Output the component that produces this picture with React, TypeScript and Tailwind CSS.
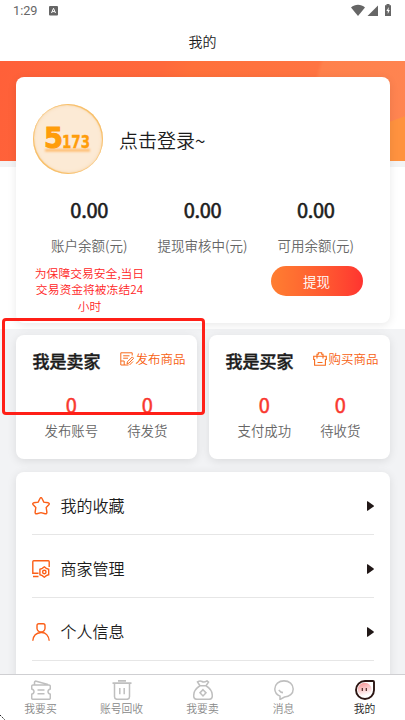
import React from "react";

const ink = "text-[#1c1c1c]";

function StatusBar() {
  return (
    <div className="flex h-[23px] items-center pl-[13px] pr-[13px] text-[#666]">
      <span className="font-[Roboto] text-[12.7px] font-normal leading-none">1:29</span>
      <svg className="-mt-px ml-3" width="9" height="10" viewBox="0 0 9 10">
        <rect width="9" height="9.5" rx="1" fill="#666" />
        <path d="M2.5 7 4.5 2.3 6.5 7M3.2 5.6H5.8" fill="none" stroke="#fff" strokeWidth="1" />
      </svg>
      <svg className="-mt-[2px] ml-auto" width="41" height="13" viewBox="0 0 41 13">
        <path d="M0 3.6C4-.1 10-.1 14 3.6L7 12Z" fill="#666" />
        <path d="M27 1.5V12H16.5Z" fill="#666" />
        <path d="M34 1.3H35.5V0H38.5V1.3H40V12H34Z" fill="#666" />
        <path d="M37.8 3 35.4 7H36.8V10L38.8 6H37.5Z" fill="#fff" />
      </svg>
    </div>
  );
}

function Logo() {
  return (
    <div className="flex size-[70px] items-center justify-center rounded-full bg-[#fcead5] shadow-[inset_-1px_1px_1px_#f8bd62,inset_1px_-1px_1px_#f8bd62,inset_0_0_4px_#f5d3a8]">
      <svg className="overflow-visible" width="50" height="40" viewBox="0 -4 50 40">
        <defs>
          <filter id="glow" x="-10%" y="-150%" width="120%" height="400%"><feGaussianBlur stdDeviation="1.3" /></filter>
        </defs>
        <rect x="2" y="26" width="45" height="2.5" fill="#ffb765" filter="url(#glow)" />
        <g fill="#ff9d0a" stroke="#ff9d0a" strokeWidth="1" strokeLinejoin="miter" className="font-['DejaVu_Sans'] font-bold">
          <text x="1" y="25" fontSize="28" textLength="19" lengthAdjust="spacingAndGlyphs">5</text>
          <text x="19" y="25.3" fontSize="18" strokeWidth=".4" textLength="28" lengthAdjust="spacingAndGlyphs">173</text>
        </g>
      </svg>
    </div>
  );
}

function Balance({ label }: { label: string }) {
  return (
    <div className="flex flex-1 flex-col items-center">
      <span className={`text-[20px] font-normal leading-[28px] tracking-[-0.3px] [-webkit-text-stroke:0.6px] ${ink}`}>0.00</span>
      <span className="mt-[11px] whitespace-nowrap text-[13.5px] leading-[20px] text-[#666]">{label}</span>
    </div>
  );
}

function Account() {
  return (
    <section className="h-[246px] rounded-lg bg-white pl-[17px] pr-[17px] shadow-[0_2px_10px_rgba(0,0,0,0.09)]">
      <div className="flex items-center pt-[27px]">
        <Logo />
        <span className={`ml-[16.5px] mt-px text-[19px] leading-[28px] ${ink}`}>点击登录~</span>
      </div>
      <div className="mt-[22px] flex">
        <Balance label="账户余额(元)" />
        <Balance label="提现审核中(元)" />
        <Balance label="可用余额(元)" />
      </div>
      <div className="mt-[10px] flex justify-between">
        <p className="w-[114px] text-center text-[11.8px] leading-[16.3px] text-[#ff2424]">
          为保障交易安全,当日<br />交易资金将被冻结24<br />小时
        </p>
        <button className="mr-[10px] mt-px h-[30px] w-[92px] rounded-full bg-linear-to-r from-[#ff7e31] to-[#ff3330] text-[13.5px] text-white">
          提现
        </button>
      </div>
    </section>
  );
}

function PublishIcon() {
  return (
    <svg width="14" height="14" viewBox="0 0 14 14" fill="none" stroke="#f76b1c" strokeWidth="1">
      <path d="M12.2 3.5V.8H.8V13H8.5M.8 9H4.2V13M3.2 3.8H9.5M3.2 6.2H8M7 11.8 7.4 9.8 12.3 4.9 13.6 6.3 8.9 11.2ZM9.5 13 13 9.5" />
    </svg>
  );
}

function BagIcon() {
  return (
    <svg width="14" height="14" viewBox="0 0 14 14" fill="none" stroke="#f76b1c" strokeWidth="1.1">
      <path d="M.7 4.2H13.3V7.5H12.4V13.3H1.6V7.5H.7ZM4 6.5V2.2H5.3V.7H8.7V2.2H10V6.5M4.5 10.5H9.5" />
    </svg>
  );
}

function TradeCard({ title, link, icon, stats }: { title: string; link: string; icon: React.ReactNode; stats: string[] }) {
  return (
    <section className="h-[124px] flex-1 rounded-lg bg-white shadow-[0_2px_10px_rgba(0,0,0,0.1)]">
      <div className="flex items-start justify-between pl-[17px] pr-[11px] pt-[13px]">
        <h2 className={`text-[17px] font-medium leading-[26px] [-webkit-text-stroke:0.4px] ${ink}`}>{title}</h2>
        <span className="flex items-center gap-px pt-px text-[12.5px] leading-[20px] text-[#f7600f]">{icon}{link}</span>
      </div>
      <div className="flex justify-evenly pt-[17px]">
        {stats.map((s) => (
          <div key={s} className="flex flex-col items-center">
            <span className="text-[20px] font-normal leading-[28px] text-[#f9372f] [-webkit-text-stroke:0.5px]">0</span>
            <span className="mt-px text-[13.4px] leading-[20px] text-[#666]">{s}</span>
          </div>
        ))}
      </div>
    </section>
  );
}

const rows = [
  { label: "我的收藏", icon: <path d="M8.1 1.3Q9 0 9.9 1.3L11.8 5.1 16.3 5.8Q18 6.4 16.8 7.8L14.2 10.6 14.9 15.4Q14.8 17.2 13.1 16.7L9 15.6 4.9 16.7Q3.2 17.2 3.1 15.4L3.8 10.6 1.2 7.8Q0 6.4 1.7 5.8L6.2 5.1Z" /> },
  { label: "商家管理", icon: <><path d="M17.2 7V1.7Q17.2.8 16.3.8H1.7Q.8.8.8 1.7V13.2H6.5M1 16.5H6.5M12.3 6.8 14.3 8.3 16.7 9.3V14.7L14.3 15.7 12.3 17.2 10.3 15.7 7.9 14.7V9.3L10.3 8.3Z" /><circle cx="12.3" cy="12" r="1.7" /></> },
  { label: "个人信息", icon: <><path d="M6.8.8H11.2Q13 .8 13 2.8V5.5Q12.5 8.8 9 9Q5.5 8.8 5 5.5V2.8Q5 .8 6.8.8Z" /><path d="M.8 17.7C1.3 12.7 4.2 9.8 9 9.5S16.7 12.7 17.2 17.7" /></> },
];

function MenuList() {
  return (
    <section className="mt-[13px] h-[220px] rounded-t-lg bg-white pl-[16.5px] pr-4 shadow-[0_2px_10px_rgba(0,0,0,0.1)]">
      {rows.map((r) => (
        <div key={r.label} className="flex h-[63px] items-center border-b border-[#e6e6e6] pt-[5px]">
          <svg width="18" height="18" viewBox="0 0 18 18" fill="none" stroke="#fb5f18" strokeWidth="1.4">{r.icon}</svg>
          <span className={`-mt-px ml-[10.5px] text-[16px] ${ink}`}>{r.label}</span>
          <svg className="ml-auto" width="7" height="10" viewBox="0 0 7 10"><path d="M0 .5Q0 0 .7.3L6.7 4.5Q7 5 6.7 5.5L.7 9.7Q0 10 0 9.5Z" fill="#211817" /></svg>
        </div>
      ))}
    </section>
  );
}

const tabs = [
  { label: "我要买", icon: <path d="M3.5 4.5V2.2Q3.8.8 5.2 1.1L17 4.3M2 4.7H18Q19.3 4.7 19.3 6V8.5Q17 9 17 11T19.3 13.5V17Q19.3 18.3 18 18.3H2Q.7 18.3.7 17V13.5Q3 13 3 11T.7 8.5V6Q.7 4.7 2 4.7M6.5 9.5H13.5M6.5 13H13.5" /> },
  { label: "账号回收", icon: <path d="M.5 3H19.5M6 .8H14M2.5 3V16Q2.5 18.3 5 18.3H15Q17.5 18.3 17.5 16V3M7.8 7.5V13.5M12.2 7.5V13.5" /> },
  { label: "我要卖", icon: <><path d="M7 5.5 4.5 1.8Q7 .2 9 1.4T14 .8L15.5 2 13 5.5H7C2.5 8 .7 11 .7 15Q.7 18.3 4 18.3H16Q19.3 18.3 19.3 15C19.3 11 17.5 8 13 5.5" /><path d="M10 9.2 13 12.2 10 15.2 7 12.2Z" /></> },
  { label: "消息", icon: <path d="M10 .8C4.8.8.8 4 .8 8.5Q.8 13 6 15.3L6 18.5 10.5 16.1C15.5 16 19.2 13 19.2 8.5S15.2.8 10 .8M4.8 9.5Q6.5 11.8 9 12" /> },
];

function TabBar() {
  return (
    <nav className="flex h-[46px] border-t border-[#cfcfd2] bg-white text-[10.8px] leading-[16px] text-[#888]">
      {tabs.map((t) => (
        <div key={t.label} className="flex flex-1 flex-col items-center pt-[5px]">
          <svg width="20" height="20" viewBox="0 0 20 19" preserveAspectRatio="none" fill="none" stroke="#bfbfbf" strokeWidth="1.5">{t.icon}</svg>
          <span>{t.label}</span>
        </div>
      ))}
      <div className="flex flex-1 flex-col items-center pt-[5px] text-[#222]">
        <svg width="20" height="20" viewBox="0 0 20 20">
          <defs>
            <linearGradient id="face" x1="0" y1="0" x2=".3" y2="1"><stop stopColor="#f78f8f" /><stop offset="1" stopColor="#fff" /></linearGradient>
          </defs>
          <path d="M10 1H18Q19 1 19 2V10A9 9 0 1 1 10 1Z" fill="#fff" stroke="#2b1512" strokeWidth="1.9" />
          <circle cx="9.7" cy="9.7" r="7" fill="url(#face)" />
          <path d="M7.3 8V11M11.3 8V11" stroke="#4a2522" strokeWidth="1.2" />
        </svg>
        <span>我的</span>
      </div>
    </nav>
  );
}

export default function App() {
  return (
    <div className="relative h-[720px] w-[405px] overflow-hidden bg-[#f2f3f5] font-['Noto_Sans_CJK_SC',sans-serif] font-[350]">
      <header className="h-[61px] bg-white">
        <StatusBar />
        <h1 className="pt-[8px] text-center text-[14px] font-[350] leading-[21px] text-[#1c1c1c]">我的</h1>
      </header>
      <main className="h-[613px] overflow-hidden">
        <div className="h-[268px] bg-white">
          <div className="h-[106px] border-b-[6px] border-[#f3f3f4] bg-[linear-gradient(160deg,transparent_8px,#ff923f_9px),linear-gradient(105deg,#ff6039_0%,#ff693b_38%,#ff703a_45%,#ff7442_74%,#ff814c_75%,#ff8552_100%)] bg-[length:16px_48px,100%_100%] bg-[position:right_bottom,0_0] bg-no-repeat px-[15.5px] pt-4">
            <Account />
          </div>
        </div>
        <div className="px-[15.5px] pt-[6px]">
          <div className="flex gap-3">
            <TradeCard title="我是卖家" link="发布商品" icon={<PublishIcon />} stats={["发布账号", "待发货"]} />
            <TradeCard title="我是买家" link="购买商品" icon={<BagIcon />} stats={["支付成功", "待收货"]} />
          </div>
          <MenuList />
        </div>
      </main>
      <TabBar />
      <div className="absolute left-[2px] top-[318px] h-[97px] w-[203px] rounded-[4px] border-3 border-[#ff1f17]" />
      <svg className="absolute bottom-0 left-0" width="5" height="5" viewBox="0 0 5 5"><path d="M0 0 5 5" stroke="#222" strokeWidth="1" strokeDasharray="1.5 1" /></svg>
    </div>
  );
}
